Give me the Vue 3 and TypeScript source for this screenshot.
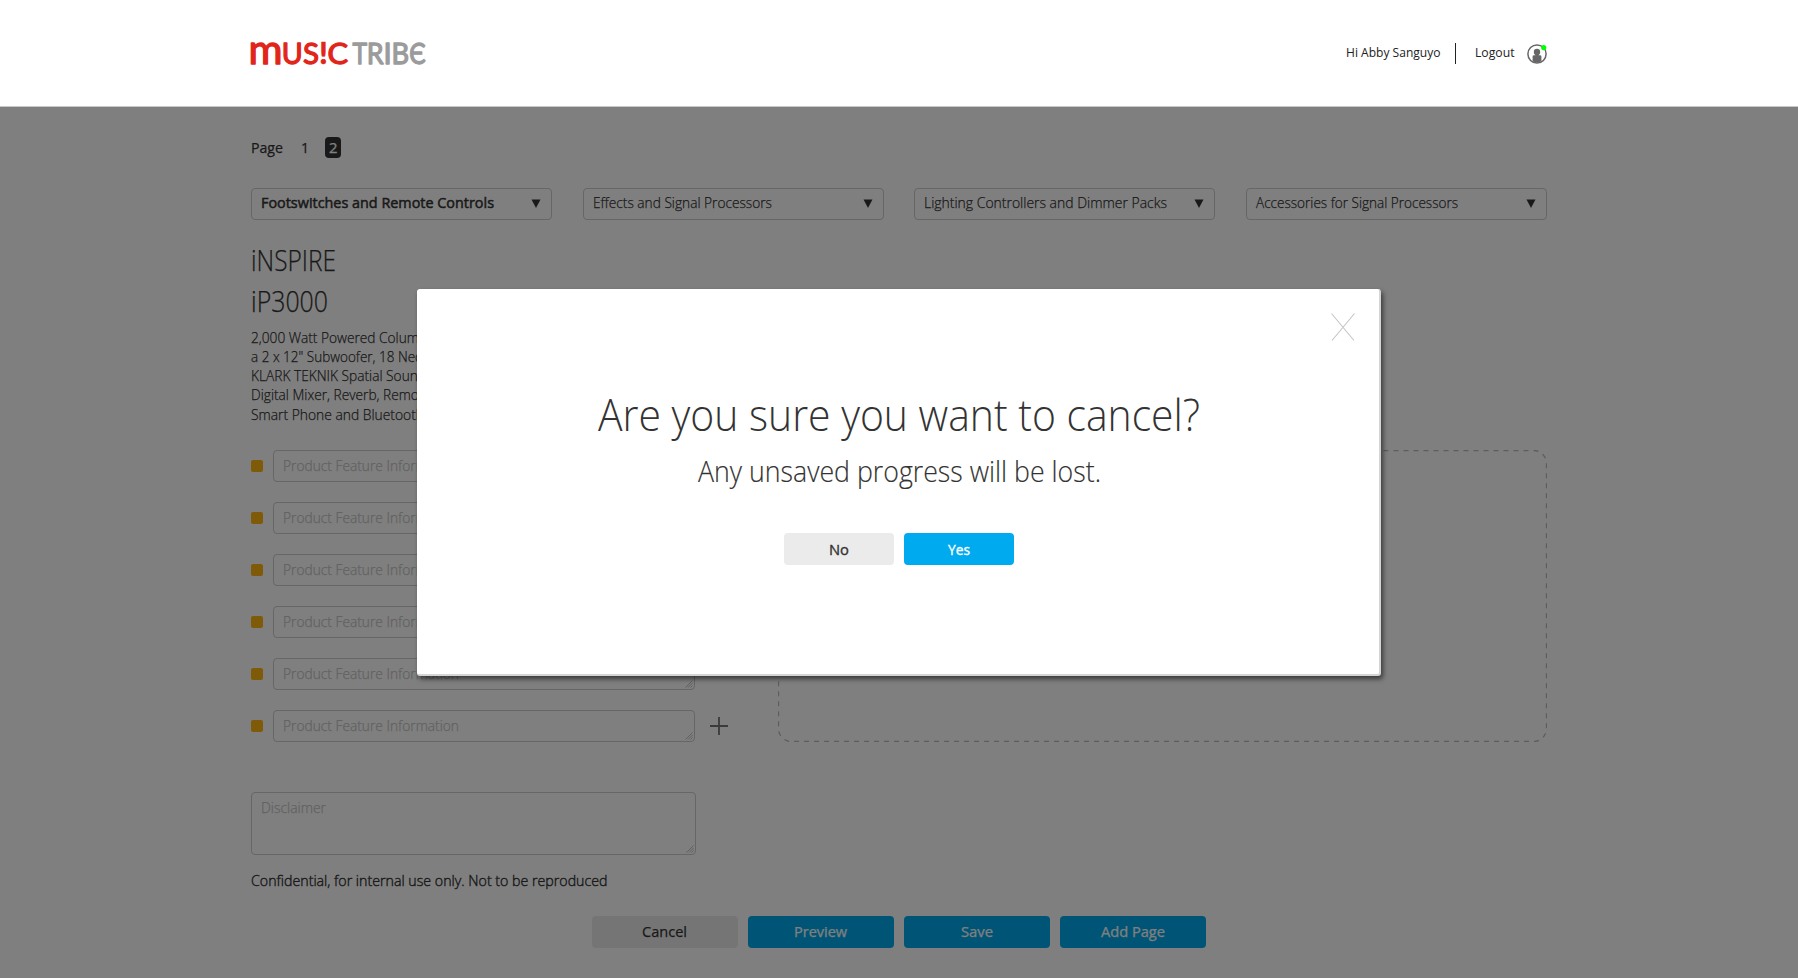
<script setup lang="ts">
import { h, type FunctionalComponent } from 'vue'

interface LabelProps {
  text: string
  width: number
  size?: number
  weight?: number
  ink?: number
}

/* One line of type set to an exact measure; its baseline sits on the bottom edge.
   `ink` thickens the strokes between two of the family's weights. */
const Label: FunctionalComponent<LabelProps> = ({ text, width, size = 15, weight = 300, ink = 0.25 }) =>
  h('svg', { class: 'label', width, height: size }, [
    h(
      'text',
      {
        x: 0,
        y: size,
        fill: 'currentColor',
        stroke: ink ? 'currentColor' : 'none',
        'stroke-width': ink,
        'font-family': "'Open Sans', sans-serif",
        'font-size': size,
        'font-weight': weight,
        textLength: width,
        lengthAdjust: 'spacingAndGlyphs',
      },
      text,
    ),
  ])
Label.props = ['text', 'width', 'size', 'weight', 'ink']

const logo = [
  { t: 'm', x: -2.6, w: 34, size: 40, tone: 'red' },
  { t: 'U', x: 30.8, w: 21, size: 29.5, tone: 'red' },
  { t: 'S', x: 52, w: 16, size: 29.5, tone: 'red' },
  { t: '!', x: 68.2, w: 8.4, size: 29.5, tone: 'red bold' },
  { t: 'C', x: 76.6, w: 20.6, size: 29.5, tone: 'red' },
  { t: 'T', x: 101.6, w: 14.6, size: 29.5, tone: 'grey' },
  { t: 'R', x: 115.8, w: 16.8, size: 29.5, tone: 'grey' },
  { t: 'I', x: 132.6, w: 8.2, size: 29.5, tone: 'grey' },
  { t: 'B', x: 140.6, w: 17.6, size: 29.5, tone: 'grey' },
  { t: 'Є', x: 158.2, w: 16.6, size: 29.5, tone: 'grey' },
]

const selects = [
  { text: 'Footswitches and Remote Controls', width: 233, weight: 400, ink: 0.5 },
  { text: 'Effects and Signal Processors', width: 179, weight: 300, ink: 0.25 },
  { text: 'Lighting Controllers and Dimmer Packs', width: 243, weight: 300, ink: 0.25 },
  { text: 'Accessories for Signal Processors', width: 202, weight: 300, ink: 0.25 },
]

const description = [
  { text: '2,000 Watt Powered Column', width: 176 },
  { text: 'a 2 x 12" Subwoofer, 18 Neo', width: 172 },
  { text: 'KLARK TEKNIK Spatial Sound', width: 175 },
  { text: 'Digital Mixer, Reverb, Remote', width: 180 },
  { text: 'Smart Phone and Bluetooth', width: 173 },
]

const featureRows = 6

const actions = [
  { text: 'Cancel', width: 45, primary: false },
  { text: 'Preview', width: 53, primary: true },
  { text: 'Save', width: 32, primary: true },
  { text: 'Add Page', width: 64, primary: true },
]
</script>

<template>
  <div class="page">
    <header class="header">
      <div class="inner header-inner">
        <svg class="logo" width="176" height="24" aria-label="Music Tribe">
          <text
            v-for="(g, i) in logo"
            :key="i"
            :class="g.tone"
            :x="g.x"
            y="22"
            :font-size="g.size"
            :textLength="g.w"
            lengthAdjust="spacingAndGlyphs"
          >{{ g.t }}</text>
        </svg>
        <div class="account">
          <Label text="Hi Abby Sanguyo" :width="94.500" :size="13" :weight="400" :ink="0" />
          <span class="divider"></span>
          <Label text="Logout" :width="39.500" :size="13" :weight="400" :ink="0" />
          <svg class="avatar" width="20" height="20" viewBox="0 0 20 20">
            <circle cx="10" cy="10" r="9.1" fill="none" stroke="#666" stroke-width="1.5" />
            <circle cx="10" cy="8" r="3.2" fill="#666" />
            <path d="M8.4 10h3.2v1.2h1.4q1.4 0 1.4 1.4v4.6q-4.4 2.6-8.8 0v-4.6q0-1.4 1.4-1.4h1.4z" fill="#666" />
            <circle cx="16.7" cy="3.6" r="2.6" fill="#0f0" />
          </svg>
        </div>
      </div>
    </header>

    <main class="main">
      <div class="inner">
        <nav class="pager">
          <Label text="Page" :width="32" :weight="400" />
          <Label class="one" text="1" :width="8" :weight="400" />
          <span class="current"><Label text="2" :width="8.5" :weight="400" /></span>
        </nav>

        <div class="selects">
          <div v-for="s in selects" :key="s.text" class="select">
            <Label :text="s.text" :width="s.width" :weight="s.weight" :ink="s.ink" />
            <svg class="caret" width="10" height="9"><path d="M.5 .5h9L5 9z" fill="#333" /></svg>
          </div>
        </div>

        <div class="titles">
          <Label text="iNSPIRE" :width="85" :size="29" />
          <Label text="iP3000" :width="77" :size="29" />
        </div>
        <div class="description">
          <Label v-for="d in description" :key="d.text" :text="d.text" :width="d.width" />
        </div>

        <div class="body">
          <div class="features">
            <div v-for="n in featureRows" :key="n" class="feature">
              <span class="bullet"></span>
              <div class="field">
                <Label text="Product Feature Information" :width="176" />
                <svg class="grip" width="8" height="8"><path d="M.5 7.500 7.500 .5M3 7.500 7.500 3M5.500 7.500 7.500 5.500" stroke="#bbb" stroke-width=".9" /></svg>
              </div>
              <svg v-if="n === featureRows" class="plus" width="18" height="18"><path d="M9 0v18M0 9h18" stroke="#777" stroke-width="1.8" /></svg>
            </div>
          </div>
          <svg class="dropzone" width="769" height="292">
            <rect x=".5" y=".5" width="768" height="291" rx="13" fill="none" stroke="#bbb" stroke-width="1.3" stroke-dasharray="5 5" stroke-dashoffset="-2" />
          </svg>
        </div>

        <div class="field disclaimer">
          <Label text="Disclaimer" :width="65" />
          <svg class="grip" width="8" height="8"><path d="M.5 7.500 7.500 .5M3 7.500 7.500 3M5.500 7.500 7.500 5.500" stroke="#bbb" stroke-width=".9" /></svg>
        </div>
        <Label class="notice" text="Confidential, for internal use only. Not to be reproduced" :width="356.500" :ink="0.4" />

        <div class="actions">
          <button v-for="a in actions" :key="a.text" class="btn" :class="{ primary: a.primary }">
            <Label :text="a.text" :width="a.width" :weight="400" />
          </button>
        </div>
      </div>
      <div class="overlay"></div>
    </main>

    <section class="modal" role="dialog">
      <svg class="close" width="24" height="28"><path d="M.5 .5 23 27.500M23.500 .5 1 27.500" stroke="#c4c4c4" stroke-width="1.100" /></svg>
      <Label class="question" text="Are you sure you want to cancel?" :width="602" :size="44.4" :ink="0" />
      <Label class="warning" text="Any unsaved progress will be lost." :width="403" :size="28.7" :ink="0.15" />
      <div class="choices">
        <button class="btn choice"><Label text="No" :width="20" :weight="400" :ink="0.35" /></button>
        <button class="btn choice primary"><Label text="Yes" :width="22" :weight="400" :ink="0.35" /></button>
      </div>
    </section>
  </div>
</template>

<style scoped>
.page {
  position: relative;
  width: 1798px;
  height: 978px;
  overflow: hidden;
  background: #fff;
  color: #333;
  font-family: 'Open Sans', sans-serif;
}
.label {
  display: block;
  flex: none;
  overflow: visible;
}
.inner {
  width: 1296px;
  margin: 0 auto;
}
.header {
  box-sizing: border-box;
  height: 107px;
  border-bottom: 1px solid #c8c8c8;
}
.header-inner {
  display: flex;
  justify-content: space-between;
}
.logo {
  margin-top: 41.5px;
  overflow: visible;
  font-family: Lato, 'Open Sans', sans-serif;
  font-weight: 400;
  stroke-width: 1.3px;
  stroke-linejoin: round;
}
.red {
  fill: #e1251b;
  stroke: #e1251b;
}
.grey {
  fill: #9b9b9b;
  stroke: #9b9b9b;
}
.bold {
  font-weight: 900;
  stroke-width: 0.5px;
}
.account {
  display: flex;
  align-items: flex-start;
  padding-top: 43px;
  color: #222;
}
.account .label {
  margin-top: 1px;
}
.divider {
  width: 1px;
  height: 21px;
  margin: 0 19px 0 14.5px;
  background: #222;
}
.avatar {
  margin: 1px 0 0 13px;
}
.main {
  position: relative;
  height: 871px;
}
.overlay {
  position: absolute;
  inset: 0;
  background: rgba(0, 0, 0, 0.5);
}
.pager {
  display: flex;
  align-items: flex-start;
  height: 21px;
  padding-top: 30px;
}
.pager > .label {
  margin-top: 1px;
}
.pager .one {
  margin-left: 18px;
}
.current {
  display: flex;
  justify-content: center;
  width: 16px;
  height: 20px;
  margin-left: 16px;
  padding-top: 1px;
  border-radius: 4px;
  background: #333;
  color: #fff;
}
.selects {
  display: flex;
  justify-content: space-between;
  margin-top: 30px;
}
.select {
  box-sizing: border-box;
  display: flex;
  justify-content: space-between;
  width: 301px;
  height: 32px;
  padding: 4px 10px 0 9px;
  border: 1px solid #ccc;
  border-radius: 4px;
}
.caret {
  margin-top: 6px;
}
.titles {
  display: flex;
  flex-direction: column;
  gap: 12px;
  margin-top: 22.4px;
}
.description {
  display: flex;
  flex-direction: column;
  gap: 4.15px;
  margin-top: 15.6px;
}
.body {
  display: flex;
  justify-content: space-between;
  height: 292px;
  margin-top: 30.4px;
}
.features {
  display: flex;
  flex-direction: column;
  gap: 20px;
}
.feature {
  display: flex;
  align-items: center;
  height: 32px;
}
.bullet {
  width: 12px;
  height: 12px;
  margin-right: 10px;
  border-radius: 2px;
  background: #ffb612;
}
.field {
  box-sizing: border-box;
  display: flex;
  justify-content: space-between;
  width: 422px;
  height: 32px;
  padding: 5px 1px 1px 9px;
  border: 1px solid #ccc;
  border-radius: 4px;
  color: #c4c4c4;
}
.grip {
  align-self: flex-end;
}
.plus {
  margin-left: 15px;
}
.disclaimer {
  width: 445px;
  height: 63px;
  margin-top: 50px;
}
.notice {
  margin-top: 16px;
}
.actions {
  display: flex;
  justify-content: center;
  gap: 10px;
  margin-top: 30px;
}
.btn {
  display: flex;
  justify-content: center;
  align-items: flex-start;
  width: 146px;
  height: 32px;
  margin: 0;
  padding: 6px 1px 0 0;
  border: 0;
  border-radius: 4px;
  background: #ebebeb;
  color: #333;
}
.btn.primary {
  background: #00aaef;
  color: #fff;
}
.modal {
  position: absolute;
  left: 417px;
  top: 289px;
  box-sizing: border-box;
  display: flex;
  flex-direction: column;
  align-items: center;
  width: 964px;
  height: 387px;
  padding: 98px 0 0 2px;
  border: solid #d5d5d5;
  border-width: 0 2px 2px 0;
  border-radius: 3px;
  background: #fff;
  box-shadow: 2px 3px 5px rgba(0, 0, 0, 0.55);
}
.close {
  position: absolute;
  top: 24px;
  right: 24.5px;
}
.warning {
  margin-top: 22px;
}
.choices {
  display: flex;
  gap: 10px;
  margin-top: 50.7px;
}
.choice {
  width: 110px;
  padding: 7px 0 0;
}
</style>

<style>
body {
  margin: 0;
  background: #fff;
}
</style>
